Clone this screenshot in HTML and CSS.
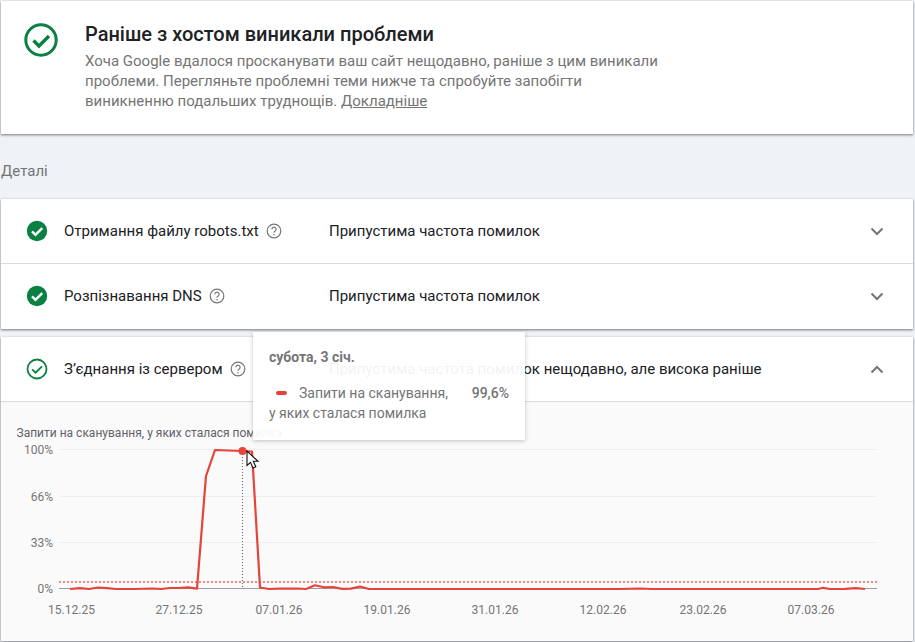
FILE: index.html
```html
<!DOCTYPE html>
<html lang="uk">
<head>
<meta charset="utf-8">
<title>Статус хоста</title>
<link rel="stylesheet" href="styles.css">
</head>
<body>
<section class="card summary">
  <svg class="summary-icon" width="34" height="34" viewBox="0 0 34 34"><circle cx="17" cy="17" r="15.200" fill="none" stroke="#0b8043" stroke-width="3"/><path d="M9.500 17.500l5.500 5.500 10-10" fill="none" stroke="#0b8043" stroke-width="3.400"/></svg>
  <div class="summary-text">
    <h1>Раніше з хостом виникали проблеми</h1>
    <p>Хоча Google вдалося просканувати ваш сайт нещодавно, раніше з цим виникали проблеми. Перегляньте проблемні теми нижче та спробуйте запобігти виникненню подальших труднощів. <a href="#">Докладніше</a></p>
  </div>
</section>
<div class="section-label">Деталі</div>
<section class="card group">
  <div class="row row-line">
    <svg class="status" width="22" height="22" viewBox="0 0 22 22"><circle cx="11" cy="11" r="10.200" fill="#0b8043"/><path d="M6 11.300l3.500 3.500 6.700-6.700" fill="none" stroke="#fff" stroke-width="2.400"/></svg>
    <div class="row-name">Отримання файлу robots.txt<svg class="help" width="16" height="16" viewBox="0 0 16 16"><circle cx="8" cy="8" r="6.800" fill="none" stroke="#757575" stroke-width="1.200"/><path d="M5.900 6.300a2.100 2.100 0 1 1 3.300 1.700c-.8.500-1.200.9-1.200 1.800" fill="none" stroke="#757575" stroke-width="1.200"/><circle cx="8" cy="11.700" r=".8" fill="#757575"/></svg></div>
    <div class="row-state">Припустима частота помилок</div>
    <svg class="chev" width="14" height="9" viewBox="0 0 14 9"><path d="M1.500 1.500L7 7l5.500-5.500" fill="none" stroke="#757575" stroke-width="2"/></svg>
  </div>
  <div class="row row-last">
    <svg class="status" width="22" height="22" viewBox="0 0 22 22"><circle cx="11" cy="11" r="10.200" fill="#0b8043"/><path d="M6 11.300l3.500 3.500 6.700-6.700" fill="none" stroke="#fff" stroke-width="2.400"/></svg>
    <div class="row-name">Розпізнавання DNS<svg class="help" width="16" height="16" viewBox="0 0 16 16"><circle cx="8" cy="8" r="6.800" fill="none" stroke="#757575" stroke-width="1.200"/><path d="M5.900 6.300a2.100 2.100 0 1 1 3.300 1.700c-.8.500-1.200.9-1.200 1.800" fill="none" stroke="#757575" stroke-width="1.200"/><circle cx="8" cy="11.700" r=".8" fill="#757575"/></svg></div>
    <div class="row-state">Припустима частота помилок</div>
    <svg class="chev" width="14" height="9" viewBox="0 0 14 9"><path d="M1.500 1.500L7 7l5.500-5.500" fill="none" stroke="#757575" stroke-width="2"/></svg>
  </div>
</section>
<section class="card group expanded">
  <div class="row row-line">
    <svg class="status" width="22" height="22" viewBox="0 0 22 22"><circle cx="11" cy="11" r="9.500" fill="none" stroke="#0b8043" stroke-width="1.800"/><path d="M6.200 11.300l3.400 3.400 6.400-6.400" fill="none" stroke="#0b8043" stroke-width="1.900"/></svg>
    <div class="row-name">З’єднання із сервером<svg class="help" width="16" height="16" viewBox="0 0 16 16"><circle cx="8" cy="8" r="6.800" fill="none" stroke="#757575" stroke-width="1.200"/><path d="M5.900 6.300a2.100 2.100 0 1 1 3.300 1.700c-.8.500-1.200.9-1.200 1.800" fill="none" stroke="#757575" stroke-width="1.200"/><circle cx="8" cy="11.700" r=".8" fill="#757575"/></svg></div>
    <div class="row-state">Припустима частота помилок нещодавно, але висока раніше</div>
    <svg class="chev" width="14" height="9" viewBox="0 0 14 9"><path d="M1.500 7.500L7 2l5.500 5.500" fill="none" stroke="#757575" stroke-width="2"/></svg>
  </div>
  <div class="chart">
    <svg class="plot" width="912" height="239" viewBox="1 402 912 239">
      <text class="plot-title" x="16.500" y="437">Запити на сканування, у яких сталася помилка</text>
      <g class="grid">
        <line x1="59" y1="449.500" x2="877" y2="449.500"/>
        <line x1="59" y1="496.500" x2="877" y2="496.500"/>
        <line x1="59" y1="542.500" x2="877" y2="542.500"/>
      </g>
      <line class="axis" x1="59" y1="588.500" x2="877" y2="588.500"/>
      <g class="y-labels">
        <text x="53" y="454">100%</text>
        <text x="53" y="501">66%</text>
        <text x="53" y="547">33%</text>
        <text x="53" y="593">0%</text>
      </g>
      <line class="limit" x1="59" y1="582" x2="877" y2="582"/>
      <line class="cursor-line" x1="242.500" y1="451" x2="242.500" y2="589"/>
      <path class="series" d="M70 589L80 588.200 89 589 98 587.500 107 588.200 116 589 134 589 152 588.500 161 589 170 588 179 588 188 587.300 197 588.700 206 476 215 450 242 451 252 451.500 260 587.500 269 589 279 588.600 297 588.500 306 589 315 585.300 324 587.300 333 587 342 588.800 351 588.600 360 586.500 369 589 620 589 640 588.500 652 589 818 589 823 587.800 830 589 845 588.800 856 588.200 865 589"/>
      <circle class="dot" cx="242.500" cy="451" r="4"/>
      <g class="x-labels">
        <text x="71.500" y="614">15.12.25</text>
        <text x="179" y="614">27.12.25</text>
        <text x="279" y="614">07.01.26</text>
        <text x="387" y="614">19.01.26</text>
        <text x="495" y="614">31.01.26</text>
        <text x="603" y="614">12.02.26</text>
        <text x="703" y="614">23.02.26</text>
        <text x="811" y="614">07.03.26</text>
      </g>
    </svg>
  </div>
</section>
<div class="tooltip">
  <div class="tip-date">субота, 3 січ.</div>
  <div class="tip-body">
    <div class="tip-first"><span class="tip-mark"></span><span class="tip-name">Запити на сканування,</span><span class="tip-value">99,6%</span></div>
    <div>у яких сталася помилка</div>
  </div>
</div>
<svg class="pointer" width="15" height="20" viewBox="0 0 15 20"><path d="M1 1v14.500l3.500-3.200 2.500 5.700 2.800-1.200-2.500-5.500h4.700z" fill="#fff" stroke="#111" stroke-width="1.100"/></svg>
</body>
</html>
```
FILE: styles.css
```css
html, body { margin: 0; padding: 0; }
body {
  position: relative;
  width: 915px;
  height: 642px;
  overflow: hidden;
  background: #eff2f7;
  font-family: Roboto, sans-serif;
  color: #202124;
  box-sizing: border-box;
  padding: 1px 2px 0 1px;
}
.card {
  background: #fff;
  box-shadow: 0 1px 2px rgba(60,64,67,.5), 0 1px 3px rgba(60,64,67,.25);
}
.summary {
  display: flex;
  height: 133px;
  box-sizing: border-box;
  padding: 22px 0 0 23px;
}
.summary-icon { flex: none; }
.summary-text { margin-left: 27px; width: 575px; }
h1 {
  margin: 0 0 6px;
  font-size: 20px;
  line-height: 22px;
  font-weight: 500;
  color: #202124;
}
p {
  margin: 0;
  font-size: 15px;
  line-height: 20px;
  color: #757575;
}
p a { color: #757575; }
.section-label {
  font-size: 15px;
  line-height: 20px;
  color: #757575;
  height: 65px;
  padding-top: 27px;
  box-sizing: border-box;
}
.group { margin-bottom: 8px; }
.row {
  display: flex;
  align-items: center;
  height: 65px;
  box-sizing: border-box;
  padding-left: 25px;
}
.row-line { border-bottom: 1px solid #dadce0; }
.row-last { padding-bottom: 1px; }
.status { flex: none; }
.row-name {
  width: 265px;
  margin-left: 16px;
  flex: none;
  display: flex;
  align-items: center;
  font-size: 15px;
}
.help { margin-left: 7px; flex: none; }
.row-state {
  flex: 1;
  font-size: 15px;
}
.chev { flex: none; margin-right: 29px; }
.expanded { margin-bottom: 0; }
.chart { background: #fafafa; height: 239px; }
.plot { display: block; font-family: Roboto, sans-serif; }
.plot-title { font-size: 12px; fill: #5f6368; }
.grid line { stroke: #eeeeee; stroke-width: 1; }
.axis { stroke: #9e9e9e; stroke-width: 1; }
.y-labels text { font-size: 12px; fill: #757575; text-anchor: end; }
.x-labels text { font-size: 12px; fill: #757575; text-anchor: middle; }
.limit { stroke: #ee8a80; stroke-width: 2; stroke-dasharray: 2 2; }
.cursor-line { stroke: #5f6368; stroke-width: 1; stroke-dasharray: 1 2; }
.series { fill: none; stroke: #e5443a; stroke-width: 2.200; stroke-linejoin: round; }
.dot { fill: #e5443a; }
.tooltip {
  position: absolute;
  left: 253px;
  top: 332px;
  width: 272px;
  height: 108px;
  box-sizing: border-box;
  padding: 17px 16px 0;
  background: rgba(255,255,255,.94);
  box-shadow: 0 1px 4px rgba(60,64,67,.3);
  color: #757575;
}
.tip-date { font-size: 14px; line-height: 16px; font-weight: 700; }
.tip-body { margin-top: 18px; font-size: 14px; line-height: 20px; }
.tip-first { display: flex; align-items: center; }
.tip-mark {
  width: 11px;
  height: 4px;
  border-radius: 2px;
  background: #e5443a;
  margin-left: 7px;
  margin-right: 12px;
  flex: none;
}
.tip-name { flex: 1; }
.tip-value { font-weight: 500; }
.pointer { position: absolute; left: 246px; top: 450px; }
```
